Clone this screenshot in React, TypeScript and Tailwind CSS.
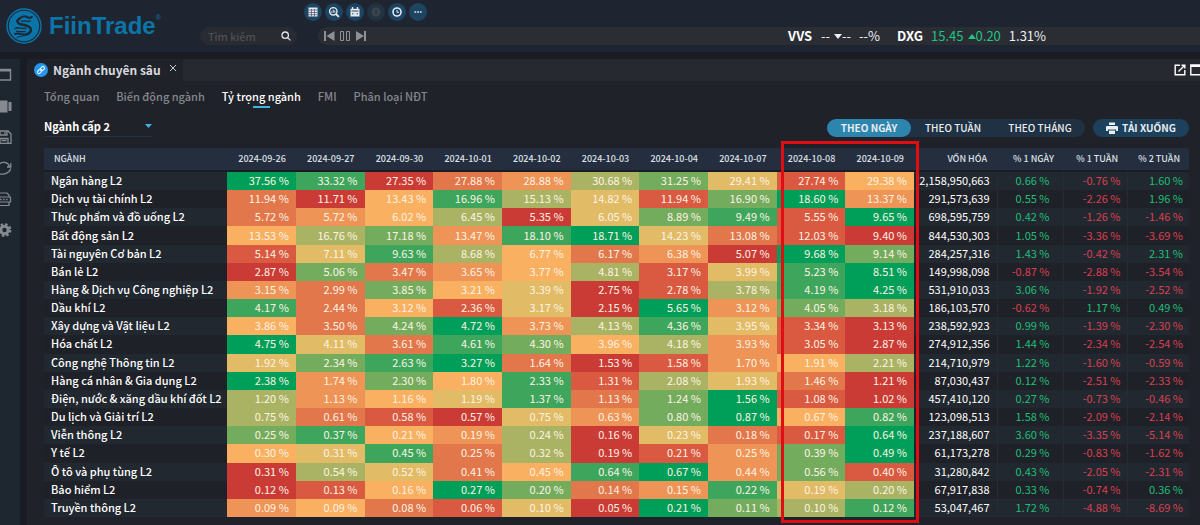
import clsx from "clsx";
import type { ReactNode } from "react";

const DATES = [
  "2024-09-26", "2024-09-27", "2024-09-30", "2024-10-01", "2024-10-02",
  "2024-10-03", "2024-10-04", "2024-10-07", "2024-10-08", "2024-10-09",
];

// lowest share of the row first, highest last
const HEAT = [
  "bg-[#cb3b36]", "bg-[#d95a41]", "bg-[#e2774b]", "bg-[#ed9456]", "bg-[#f9b061]",
  "bg-[#e1bb66]", "bg-[#aab363]", "bg-[#74ac5e]", "bg-[#3da65c]", "bg-[#009f59]",
];

type Row = { name: string; days: string; heat: string; cap: string; changes: string[] };

const ROWS: Row[] = [
  { name: "Ngân hàng L2", days: "37.56 33.32 27.35 27.88 28.88 30.68 31.25 29.41 27.74 29.38", heat: "9802367514", cap: "2,158,950,663", changes: ["0.66", "-0.76", "1.60"] },
  { name: "Dịch vụ tài chính L2", days: "11.94 11.71 13.43 16.96 15.13 14.82 11.94 16.90 18.60 13.37", heat: "2048651793", cap: "291,573,639", changes: ["0.55", "-2.26", "1.96"] },
  { name: "Thực phẩm và đồ uống L2", days: "5.72 5.72 6.02 6.45 5.35 6.05 8.89 9.49 5.55 9.65", heat: "2346057819", cap: "698,595,759", changes: ["0.42", "-1.26", "-1.46"] },
  { name: "Bất động sản L2", days: "13.53 16.76 17.18 13.47 18.10 18.71 14.23 13.08 12.03 9.40", heat: "4673895210", cap: "844,530,303", changes: ["1.05", "-3.36", "-3.69"] },
  { name: "Tài nguyên Cơ bản L2", days: "5.14 7.11 9.63 8.68 6.77 6.17 6.38 5.07 9.68 9.14", heat: "1586423097", cap: "284,257,316", changes: ["1.43", "-0.42", "2.31"] },
  { name: "Bán lẻ L2", days: "2.87 5.06 3.47 3.65 3.77 4.81 3.17 3.99 5.23 8.51", heat: "0723461589", cap: "149,998,098", changes: ["-0.87", "-2.88", "-3.54"] },
  { name: "Hàng & Dịch vụ Công nghiệp L2", days: "3.15 2.99 3.85 3.21 3.39 2.75 2.78 3.78 4.19 4.25", heat: "3274501689", cap: "531,910,033", changes: ["3.06", "-1.92", "-2.52"] },
  { name: "Dầu khí L2", days: "4.17 2.44 3.12 2.36 3.17 2.15 5.65 3.12 4.05 3.18", heat: "8241509376", cap: "186,103,570", changes: ["-0.62", "1.17", "0.49"] },
  { name: "Xây dựng và Vật liệu L2", days: "3.86 3.50 4.24 4.72 3.73 4.13 4.36 3.95 3.34 3.13", heat: "4279368510", cap: "238,592,923", changes: ["0.99", "-1.39", "-2.30"] },
  { name: "Hóa chất L2", days: "4.75 4.11 3.61 4.61 4.30 3.96 4.18 3.93 3.05 2.87", heat: "9528746310", cap: "274,912,356", changes: ["1.44", "-2.34", "-2.54"] },
  { name: "Công nghệ Thông tin L2", days: "1.92 2.34 2.63 3.27 1.64 1.53 1.58 1.70 1.91 2.21", heat: "5789201346", cap: "214,710,979", changes: ["1.22", "-1.60", "-0.59"] },
  { name: "Hàng cá nhân & Gia dụng L2", days: "2.38 1.74 2.30 1.80 2.33 1.31 2.08 1.93 1.46 1.21", heat: "9374816520", cap: "87,030,437", changes: ["0.12", "-2.51", "-2.33"] },
  { name: "Điện, nước & xăng dầu khí đốt L2", days: "1.20 1.13 1.16 1.19 1.37 1.13 1.24 1.56 1.08 1.02", heat: "6345827910", cap: "457,410,120", changes: ["0.27", "-0.73", "-0.46"] },
  { name: "Du lịch và Giải trí L2", days: "0.75 0.61 0.58 0.57 0.75 0.63 0.80 0.87 0.67 0.82", heat: "6210537948", cap: "123,098,513", changes: ["1.58", "-2.09", "-2.14"] },
  { name: "Viễn thông L2", days: "0.25 0.37 0.21 0.19 0.24 0.16 0.23 0.18 0.17 0.64", heat: "7843605219", cap: "237,188,607", changes: ["3.60", "-3.35", "-5.14"] },
  { name: "Y tế L2", days: "0.30 0.31 0.45 0.25 0.32 0.19 0.21 0.25 0.39 0.49", heat: "4582601379", cap: "61,173,278", changes: ["0.29", "-0.83", "-1.62"] },
  { name: "Ô tô và phụ tùng L2", days: "0.31 0.54 0.52 0.41 0.45 0.64 0.67 0.44 0.56 0.40", heat: "0652489371", cap: "31,280,842", changes: ["0.43", "-2.05", "-2.31"] },
  { name: "Bảo hiểm L2", days: "0.12 0.13 0.16 0.27 0.20 0.14 0.15 0.22 0.19 0.20", heat: "0149723856", cap: "67,917,838", changes: ["0.33", "-0.74", "0.36"] },
  { name: "Truyền thông L2", days: "0.09 0.09 0.08 0.06 0.10 0.05 0.21 0.11 0.10 0.12", heat: "3421509768", cap: "53,047,467", changes: ["1.72", "-4.88", "-8.69"] },
];

function Logo() {
  return (
    <a href="#" className="flex w-[194px] items-center gap-[7px] pl-[6px] text-[#0b75a9]" aria-label="FiinTrade">
      <svg viewBox="0 0 36 36" className="size-9 shrink-0">
        <circle cx="18" cy="18" r="17" fill="none" stroke="currentColor" strokeWidth="1.4" />
        <circle cx="18" cy="18" r="15.2" fill="currentColor" />
        <g fill="none" stroke="#1c2b3a" strokeLinecap="round" strokeLinejoin="round">
          <path d="M13.500 10.500c-3 2-2.500 4.500.5 5.500 4.500 1.300 9 1.500 10.500 4.300 1.300 3-1 5.500-4.500 6.200" strokeWidth="2.600" />
          <path d="M13.500 10.500c3-3 6-2.500 8-1.300 1.500 1 3 1 4.500-.4M20 26.500c-4 .8-6-2-11-.5" strokeWidth="2" />
          <path d="M15.500 13.300c2.500-1.300 5.500 1 9-.3M9 20.500c3-2.200 6.500.8 11-.3M10.500 23.300c3 0 5.500 1 8.500 0" strokeWidth="1.300" />
          <path d="M11 29.500c3-1.500 7-1.500 10-2.500" strokeWidth="1" />
        </g>
      </svg>
      <span className="flex items-start font-['Liberation_Sans',sans-serif]">
        <span className="text-[24px] leading-7 font-bold">FiinTrade</span>
        <span className="text-[7px] leading-3">®</span>
      </span>
    </a>
  );
}

function RoundButton({ label, dim, children }: { label: string; dim?: boolean; children: ReactNode }) {
  return (
    <button
      type="button"
      aria-label={label}
      className={clsx("flex size-[18px] items-center justify-center rounded-full", dim ? "bg-[#213241] text-[#3a4350]" : "bg-[#1d4460] text-[#e4eaf2]")}
    >
      <svg viewBox="0 0 12 12" className="size-3" fill="none" stroke="currentColor">{children}</svg>
    </button>
  );
}

function Toolbar() {
  return (
    <div className="flex gap-[3px] pl-[110px]">
      <RoundButton label="Bảng giá">
        <rect x="1.500" y="1.500" width="9" height="9" fill="currentColor" stroke="none" />
        <path d="M1.500 4h9M1.500 6.500h9M1.500 8.700h9M4.500 3v7.500M7.500 3v7.500" stroke="#4a4f6e" strokeWidth=".7" />
      </RoundButton>
      <RoundButton label="Bộ lọc">
        <circle cx="5.300" cy="5.300" r="3.700" strokeWidth="1.400" />
        <path d="M8 8l2.800 2.800" strokeWidth="1.900" />
        <path d="M3.800 6.800V5M5.300 6.800V3.500M6.800 6.800V4.500" strokeWidth=".9" />
      </RoundButton>
      <RoundButton label="Lịch sự kiện">
        <path d="M1.500 2.800h9v7.700h-9z" fill="currentColor" stroke="none" />
        <path d="M3.500 1v2.500M8.500 1v2.500" strokeWidth="1.400" />
        <path d="M2.500 5h7M3 7.800h1.500M7.500 7.800H9" stroke="#2b4a68" />
      </RoundButton>
      <RoundButton label="Thông tin" dim>
        <circle cx="6" cy="6" r="4.500" fill="currentColor" stroke="none" />
        <path d="M6 3.500v5" stroke="#213241" strokeWidth="1.500" />
      </RoundButton>
      <RoundButton label="Lịch sử">
        <circle cx="6" cy="6" r="4" strokeWidth="1.600" />
        <path d="M6 3.800V6.300h2" strokeWidth="1" />
      </RoundButton>
      <RoundButton label="Thêm">
        <path d="M2.500 6h1.700M5.200 6h1.700M7.900 6h1.700" strokeWidth="1.500" />
      </RoundButton>
    </div>
  );
}

function Ticker() {
  return (
    <div className="flex h-[18px] flex-1 items-center rounded-l-full bg-[#2b2d35] pl-1.5 text-[13px] leading-[18px] text-[#eceef2]">
      <div className="flex w-[464px] items-center gap-[5px] text-[#8d9197]">
        <button type="button" aria-label="Lùi">
          <svg viewBox="0 0 11 12" className="h-3 w-[11px]" fill="currentColor"><path d="M0 1h2v10H0zM10.500 1v10L2.500 6z" /></svg>
        </button>
        <button type="button" aria-label="Tạm dừng">
          <svg viewBox="0 0 11 12" className="h-3 w-[11px]" fill="none" stroke="currentColor"><path d="M.500 1.500h3v9h-3zM6.500 1.500h3v9h-3z" /></svg>
        </button>
        <button type="button" aria-label="Tiến">
          <svg viewBox="0 0 11 12" className="h-3 w-[11px]" fill="currentColor"><path d="M8 1h2v10H8zM0 1v10l8-5z" /></svg>
        </button>
      </div>
      <b className="w-[33px] text-white">VVS</b>
      <span className="flex items-center">
        --
        <svg viewBox="0 0 8 5" className="ml-1 h-[5px] w-2" fill="currentColor"><path d="M0 0h8L4 5z" /></svg>
        --
      </span>
      <span className="ml-2 w-[38px]">--%</span>
      <b className="w-[34px] text-white">DXG</b>
      <span className="flex items-center text-[#1fc583]">
        15.45
        <svg viewBox="0 0 8 5" className="ml-1 h-[5px] w-2" fill="currentColor"><path d="M0 5h8L4 0z" /></svg>
        0.20
      </span>
      <span className="ml-2">1.31%</span>
    </div>
  );
}

function Header() {
  return (
    <header className="flex h-[52px] bg-[#1f2530]">
      <Logo />
      <div className="flex flex-1 flex-col gap-[6px] pt-[3px]">
        <Toolbar />
        <div className="flex items-center gap-[21px] pl-[6px]">
          <label className="flex h-[18px] w-[97px] items-center rounded-full bg-[#292b32] pr-1.5 pl-2">
            <input
              type="text"
              aria-label="Tìm kiếm"
              placeholder="Tìm kiếm"
              className="w-0 flex-1 bg-transparent text-[11px] leading-[18px] outline-none placeholder:text-[#54565c]"
            />
            <svg viewBox="0 0 10 10" className="size-[10px]" fill="none" stroke="#dfe3e8" strokeWidth="1.300">
              <circle cx="4.200" cy="4.200" r="3.200" /><path d="M6.600 6.600l2.800 2.800" />
            </svg>
          </label>
          <Ticker />
        </div>
      </div>
    </header>
  );
}

function Sidebar() {
  return (
    <nav className="flex w-5 shrink-0 flex-col items-end gap-[17px] bg-[#1e2630] pt-[9px] pr-2 text-[#858a91]">
      <button type="button" aria-label="Cửa sổ">
        <svg viewBox="0 0 12 14" className="h-[14px] w-3"><path d="M-3 1.500h13.500v10.500H-3" fill="none" stroke="currentColor" strokeWidth="1.400" /><path d="M-3 1h14v2.500H-3z" fill="currentColor" /></svg>
      </button>
      <button type="button" aria-label="Bố cục">
        <svg viewBox="0 0 12 14" className="h-[14px] w-3" fill="currentColor"><path d="M0 1.500h7.500v12H0zM8.500 3h3v9h-3z" /></svg>
      </button>
      <button type="button" aria-label="Lưu">
        <svg viewBox="0 0 12 14" className="h-[14px] w-3" fill="none" stroke="currentColor" strokeWidth="1.300"><path d="M-3 1H8l3 3v9.300H-3M0 1.500V5h7V1.500M5 2v2M0 13V8.500h8V13M1.500 10.500h5" /></svg>
      </button>
      <button type="button" aria-label="Tải lại">
        <svg viewBox="0 0 12 14" className="h-[14px] w-3" fill="none" stroke="currentColor" strokeWidth="1.300"><path d="M-1 3.500C2 0 8 .800 9.500 5.500M10.800 2v4H7M-2 12.500c4 1.500 11 .500 12.800-5" /></svg>
      </button>
      <button type="button" aria-label="In">
        <svg viewBox="0 0 12 14" className="h-[14px] w-3" fill="none" stroke="currentColor"><path d="M-1 4.500V1h8l2 2v1.500M-3 5h13.500v5H-3M-1 10v3.500h10V10" strokeWidth="1.200" /><path d="M0 7.500h1.500M3 7.500h1.500M6 7.500h1.500" strokeWidth="1.500" /></svg>
      </button>
      <button type="button" aria-label="Cài đặt">
        <svg viewBox="0 0 12 14" className="h-[14px] w-3">
          <circle cx="4.500" cy="7" r="3.700" fill="none" stroke="currentColor" strokeWidth="3" />
          <circle cx="4.500" cy="7" r="5.800" fill="none" stroke="currentColor" strokeWidth="2.200" strokeDasharray="2.500 2.050" />
        </svg>
      </button>
    </nav>
  );
}

function WindowBar() {
  return (
    <div className="flex h-[22px] items-center justify-between bg-[#272930]">
      <div className="flex h-full w-[156px] items-center gap-[5px] bg-[#202229] pl-[7px]">
        <svg viewBox="0 0 14 14" className="size-[14px] shrink-0" fill="none">
          <circle cx="7" cy="7" r="7" fill="#2596ee" />
          <g stroke="#e6f3ff" strokeWidth="1.100" transform="rotate(-45 7 7)">
            <rect x="2.600" y="5.500" width="5" height="3" rx="1.500" /><rect x="6.400" y="5.500" width="5" height="3" rx="1.500" />
          </g>
        </svg>
        <h1 className="text-[12px] leading-5 font-bold whitespace-nowrap text-[#d6d9de]">Ngành chuyên sâu</h1>
        <button type="button" aria-label="Đóng" className="ml-[3px] pb-1">
          <svg viewBox="0 0 8 8" className="size-2" stroke="#c7cad0"><path d="M1 1l6 6M7 1L1 7" /></svg>
        </button>
      </div>
      <div className="flex gap-1 overflow-hidden text-white">
        <button type="button" aria-label="Mở cửa sổ mới">
          <svg viewBox="0 0 12 12" className="size-3" fill="none" stroke="currentColor" strokeWidth="1.400"><path d="M6 1.200H1.200v9.600h9.600V6M7.500 1.200h3.300v3.300M10.500 1.500L4.500 7.500" /></svg>
        </button>
        <button type="button" aria-label="Phóng to">
          <svg viewBox="0 0 10 12" className="h-3 w-[10px]" fill="none" stroke="currentColor" strokeWidth="1.400"><path d="M10 1H.800v9.800H10M.800 2.200H10" /></svg>
        </button>
      </div>
    </div>
  );
}

const TABS = ["Tổng quan", "Biến động ngành", "Tỷ trọng ngành", "FMI", "Phân loại NĐT"];

function Tabs() {
  return (
    <div className="flex gap-[17px] pt-[5px] text-[11px] leading-5 font-medium text-[#84878d]">
      {TABS.map((tab) => (
        <button type="button" key={tab} className={clsx("flex flex-col items-center", tab === "Tỷ trọng ngành" && "text-white")}>
          {tab}
          {tab === "Tỷ trọng ngành" && <span className="h-0.5 w-[17px] bg-[#42b4e0]" />}
        </button>
      ))}
    </div>
  );
}

function Filters() {
  return (
    <div className="flex items-start justify-between pt-[7px]">
      <div className="relative flex w-[108px] border-b border-[#243343]">
        <select aria-label="Cấp ngành" className="h-[21px] w-full appearance-none bg-transparent text-[11px] leading-5 font-bold text-white">
          <option>Ngành cấp 2</option>
        </select>
        <svg viewBox="0 0 7 4" className="pointer-events-none absolute top-[9px] right-0 h-1 w-[7px]" fill="#3fb4e4"><path d="M0 0h7L3.500 4z" /></svg>
      </div>
      <div className="flex gap-2 pt-1 text-[10px] leading-[18px] font-bold text-[#e9edf1]">
        <div className="flex rounded-full bg-[#1f3142]">
          <button type="button" className="w-[84px] rounded-full bg-[#2d84ad]">THEO NGÀY</button>
          <button type="button" className="w-[84px] font-medium">THEO TUẦN</button>
          <button type="button" className="w-[90px] font-medium">THEO THÁNG</button>
        </div>
        <button type="button" className="flex w-24 items-center justify-center gap-1 rounded-full bg-[#1d415c]">
          <svg viewBox="0 0 12 12" className="size-3" fill="currentColor"><path d="M3 .500h6V3H3zM1 4h10a1 1 0 011 1v4H10V7.500H2V9H0V5a1 1 0 011-1z" /><path d="M3 8.500h6V12H3z" /></svg>
          TẢI XUỐNG
        </button>
      </div>
    </div>
  );
}

function HeatTable() {
  return (
    <div className="relative mt-[11px]">
      <table className="h-[369px] w-full table-fixed border-collapse text-[11px] leading-4">
        <colgroup>
          <col />
          {DATES.map((d) => <col key={d} className="w-[6%]" />)}
          <col className="w-[83px]" />
          <col className="w-[66px]" />
          <col className="w-[64px]" />
          <col className="w-[62px]" />
        </colgroup>
        <thead>
          <tr className="h-[23px] border-b-2 border-[#1b1d24] bg-[#252e3e] text-[9px] text-[#dde1e7]">
            <th className="pl-[10px] text-left font-medium">NGÀNH</th>
            {DATES.map((d) => <th key={d} className="pr-[10px] text-right font-medium">{d}</th>)}
            <th className="pr-[10px] text-right font-medium">VỐN HÓA</th>
            <th className="pr-[9px] text-right font-medium">% 1 NGÀY</th>
            <th className="pr-[9px] text-right font-medium">% 1 TUẦN</th>
            <th className="pr-[9px] text-right font-medium">% 2 TUẦN</th>
          </tr>
        </thead>
        <tbody>
          {ROWS.map((row) => (
            <tr key={row.name} className="odd:bg-[#22282f] even:bg-[#1f2128]">
              <th scope="row" className="pb-0.5 pl-[7px] text-left font-medium whitespace-nowrap text-white">{row.name}</th>
              {row.days.split(" ").map((v, i) => (
                <td key={DATES[i]} className={clsx("pr-[7px] pb-0.5 text-right text-[#fdf3e4]", HEAT[Number(row.heat[i])])}>{v} %</td>
              ))}
              <td className="pr-[7px] pb-0.5 text-right text-white">{row.cap}</td>
              {row.changes.map((v, i) => (
                <td key={i} className={clsx("border-l border-[#272b33] pb-0.5 text-right", i === 0 ? "pr-[13px]" : "pr-[6px]", v.startsWith("-") ? "text-[#d9404f]" : "text-[#1fbf77]")}>
                  {v} %
                </td>
              ))}
            </tr>
          ))}
        </tbody>
      </table>
      <div className="pointer-events-none absolute -top-[7px] right-[270px] -bottom-[6px] w-[138px] border-3 border-[#e00d12]" />
    </div>
  );
}

export default function App() {
  return (
    <div className="flex min-h-screen flex-col overflow-hidden bg-[#1a1c25] font-['Noto_Sans_CJK_SC','Open_Sans',sans-serif]">
      <Header />
      <div className="mt-[7px] flex flex-1 gap-[7px]">
        <Sidebar />
        <main className="min-w-0 flex-1 bg-[#202229]">
          <WindowBar />
          <div className="pr-[11px] pl-[17px]">
            <Tabs />
            <Filters />
            <HeatTable />
          </div>
        </main>
      </div>
    </div>
  );
}
